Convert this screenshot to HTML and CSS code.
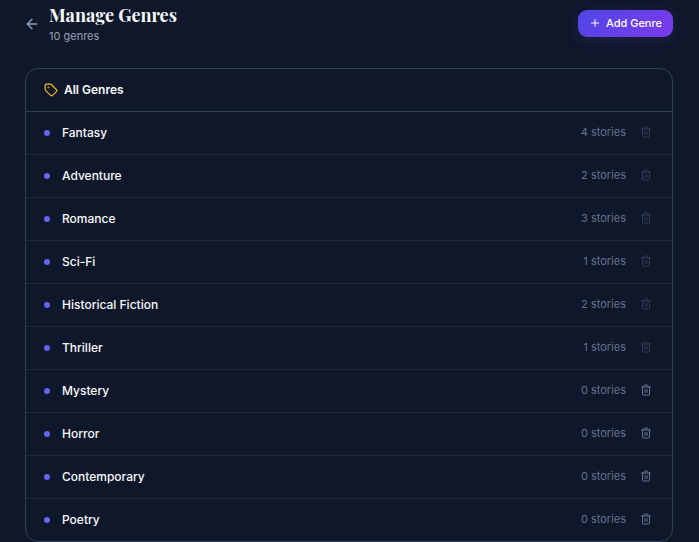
FILE: index.html
```html
<!DOCTYPE html>
<html lang="en">
<head>
    <meta charset="UTF-8">
    <meta name="viewport" content="width=device-width, initial-scale=1.0">
    <title>Manage Genres</title>
    <link rel="stylesheet" href="styles.css">
</head>
<body>
    <!-- Shared icons -->
    <svg class="sprite" aria-hidden="true">
        <symbol id="icon-trash" viewBox="0 0 24 24">
            <path d="M3 6h18"/>
            <path d="M19 6v14a2 2 0 0 1-2 2H7a2 2 0 0 1-2-2V6"/>
            <path d="M8 6V4a2 2 0 0 1 2-2h4a2 2 0 0 1 2 2v2"/>
            <path d="M10 11v6M14 11v6"/>
        </symbol>
    </svg>

    <main class="page">
        <header class="page-header">
            <a href="#" class="back-link" aria-label="Back">
                <svg class="icon icon-md" viewBox="0 0 24 24"><path d="m12 19-7-7 7-7M19 12H5"/></svg>
            </a>
            <div class="heading">
                <h1>Manage Genres</h1>
                <p>10 genres</p>
            </div>
            <button type="button" class="add-button">
                <svg class="icon icon-sm" viewBox="0 0 24 24"><path d="M5 12h14M12 5v14"/></svg>
                Add Genre
            </button>
        </header>

        <section class="card">
            <div class="card-header">
                <svg class="icon icon-tag" viewBox="0 0 24 24">
                    <path d="M12.586 2.586A2 2 0 0 0 11.172 2H4a2 2 0 0 0-2 2v7.172a2 2 0 0 0 .586 1.414l8.704 8.704a2.426 2.426 0 0 0 3.42 0l6.58-6.58a2.426 2.426 0 0 0 0-3.42z"/>
                    <circle class="tag-hole" cx="7.5" cy="7.5" r=".5"/>
                </svg>
                <h2>All Genres</h2>
            </div>
            <ul class="genre-list">
                <li class="genre">
                    <span class="dot"></span>
                    <span class="name">Fantasy</span>
                    <span class="count">4 stories</span>
                    <button type="button" class="delete" aria-label="Delete Fantasy" disabled><svg class="icon icon-sm"><use href="#icon-trash"/></svg></button>
                </li>
                <li class="genre">
                    <span class="dot"></span>
                    <span class="name">Adventure</span>
                    <span class="count">2 stories</span>
                    <button type="button" class="delete" aria-label="Delete Adventure" disabled><svg class="icon icon-sm"><use href="#icon-trash"/></svg></button>
                </li>
                <li class="genre">
                    <span class="dot"></span>
                    <span class="name">Romance</span>
                    <span class="count">3 stories</span>
                    <button type="button" class="delete" aria-label="Delete Romance" disabled><svg class="icon icon-sm"><use href="#icon-trash"/></svg></button>
                </li>
                <li class="genre">
                    <span class="dot"></span>
                    <span class="name">Sci-Fi</span>
                    <span class="count">1 stories</span>
                    <button type="button" class="delete" aria-label="Delete Sci-Fi" disabled><svg class="icon icon-sm"><use href="#icon-trash"/></svg></button>
                </li>
                <li class="genre">
                    <span class="dot"></span>
                    <span class="name">Historical Fiction</span>
                    <span class="count">2 stories</span>
                    <button type="button" class="delete" aria-label="Delete Historical Fiction" disabled><svg class="icon icon-sm"><use href="#icon-trash"/></svg></button>
                </li>
                <li class="genre">
                    <span class="dot"></span>
                    <span class="name">Thriller</span>
                    <span class="count">1 stories</span>
                    <button type="button" class="delete" aria-label="Delete Thriller" disabled><svg class="icon icon-sm"><use href="#icon-trash"/></svg></button>
                </li>
                <li class="genre">
                    <span class="dot"></span>
                    <span class="name">Mystery</span>
                    <span class="count">0 stories</span>
                    <button type="button" class="delete" aria-label="Delete Mystery"><svg class="icon icon-sm"><use href="#icon-trash"/></svg></button>
                </li>
                <li class="genre">
                    <span class="dot"></span>
                    <span class="name">Horror</span>
                    <span class="count">0 stories</span>
                    <button type="button" class="delete" aria-label="Delete Horror"><svg class="icon icon-sm"><use href="#icon-trash"/></svg></button>
                </li>
                <li class="genre">
                    <span class="dot"></span>
                    <span class="name">Contemporary</span>
                    <span class="count">0 stories</span>
                    <button type="button" class="delete" aria-label="Delete Contemporary"><svg class="icon icon-sm"><use href="#icon-trash"/></svg></button>
                </li>
                <li class="genre">
                    <span class="dot"></span>
                    <span class="name">Poetry</span>
                    <span class="count">0 stories</span>
                    <button type="button" class="delete" aria-label="Delete Poetry"><svg class="icon icon-sm"><use href="#icon-trash"/></svg></button>
                </li>
            </ul>
        </section>
    </main>
</body>
</html>
```
FILE: styles.css
```css
* {
    box-sizing: border-box;
    margin: 0;
    padding: 0;
}

body {
    font-family: Inter, sans-serif;
    background-color: #0f172a;
    color: #f8fafc;
}

button {
    font-family: inherit;
    border: none;
    cursor: pointer;
}

.sprite {
    display: none;
}

.icon {
    display: block;
    flex-shrink: 0;
    fill: none;
    stroke: currentColor;
    stroke-width: 2;
    stroke-linecap: round;
    stroke-linejoin: round;
}

.icon-sm {
    width: 12px;
    height: 12px;
}

.icon-md {
    width: 16px;
    height: 16px;
}

.page {
    padding: 3px 26px 0 24px;
}

.page-header {
    display: flex;
    align-items: center;
    gap: 9px;
    margin-bottom: 24px;
}

.back-link {
    color: #94a3b8;
}

.heading {
    flex: 1;
}

.heading h1 {
    font-family: "Playfair Display", "Liberation Serif", serif;
    font-size: 18px;
    line-height: 25px;
    font-weight: 700;
}

.heading p {
    font-size: 11px;
    line-height: 16px;
    color: #94a3b8;
}

.add-button {
    display: flex;
    align-items: center;
    gap: 5px;
    padding: 5px 11px 6px;
    border-radius: 9px;
    background: linear-gradient(135deg, #4f46e5, #7c3aed);
    box-shadow: 0 3px 16px rgba(99, 102, 241, 0.16);
    color: #ffffff;
    font-size: 11px;
    line-height: 16px;
    font-weight: 500;
}

.card {
    margin-left: 1px;
    border: 1px solid #334155;
    border-radius: 13px;
    overflow: hidden;
}

.card-header {
    display: flex;
    align-items: center;
    gap: 6px;
    padding: 12px 18px;
    border-bottom: 1px solid #334155;
}

.card-header h2 {
    font-size: 12px;
    line-height: 18px;
    font-weight: 600;
}

.icon-tag {
    width: 14px;
    height: 14px;
    color: #fbbf24;
}

.tag-hole {
    fill: currentColor;
}

.genre-list {
    list-style: none;
}

.genre {
    display: flex;
    align-items: center;
    gap: 12px;
    padding: 12px 18px;
    border-bottom: 1px solid #1e293b;
}

.genre:last-child {
    border-bottom: none;
}

.dot {
    width: 6px;
    height: 6px;
    border-radius: 50%;
    background-color: #6366f1;
}

.name {
    flex: 1;
    font-size: 12px;
    line-height: 18px;
    font-weight: 500;
}

.count {
    padding-bottom: 2px;
    font-size: 11px;
    line-height: 16px;
    color: #64748b;
}

.delete {
    padding: 2px 2px 4px;
    background: none;
    color: #64748b;
}

.delete:disabled {
    opacity: 0.4;
    cursor: not-allowed;
}
```
